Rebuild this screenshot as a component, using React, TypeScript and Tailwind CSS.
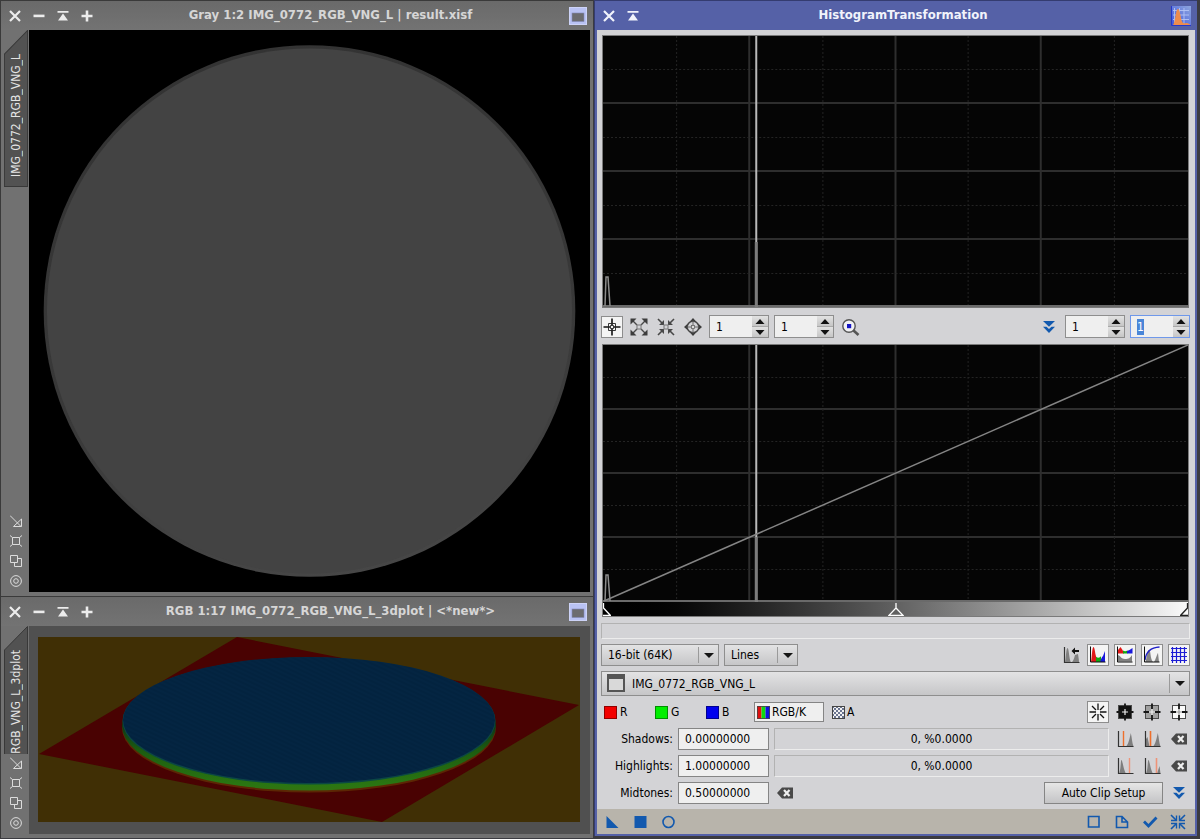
import { useEffect, useRef } from "react";
import type { ReactNode } from "react";

type IconProps = { children: ReactNode; className?: string };

function Icon({ children, className = "" }: IconProps) {
  return (
    <svg viewBox="0 0 22 22" width="22" height="22" fill="none" aria-hidden="true" className={"shrink-0 " + className}>
      {children}
    </svg>
  );
}

/* ---------- window chrome ---------- */

function CloseGlyph() {
  return (
    <svg viewBox="0 0 12 12" width="12" height="12" fill="none" stroke="currentColor" strokeWidth="2.2">
      <path d="M1 1L11 11M11 1L1 11" />
    </svg>
  );
}
function MinusGlyph() {
  return (
    <svg viewBox="0 0 12 12" width="12" height="12" fill="currentColor">
      <rect x="0.5" y="4.6" width="11" height="2.6" />
    </svg>
  );
}
function ShadeGlyph() {
  return (
    <svg viewBox="0 0 12 12" width="12" height="12" fill="currentColor">
      <path d="M.5 1h11v1.8H.5zM6 3.6L11 10.6H1z" />
    </svg>
  );
}
function PlusGlyph() {
  return (
    <svg viewBox="0 0 12 12" width="12" height="12" fill="currentColor">
      <path d="M4.7.5h2.6v4.2h4.2v2.6H7.3v4.2H4.7V7.3H.5V4.7h4.2z" />
    </svg>
  );
}
function WindowGlyph() {
  return (
    <svg viewBox="0 0 18 18" width="18" height="18">
      <rect x=".5" y=".5" width="17" height="17" fill="#b9c2f3" stroke="#cdd3f7" />
      <rect x="3" y="6" width="12" height="8.5" fill="#6c6c70" stroke="#8289b8" strokeWidth=".6" />
    </svg>
  );
}
function HistogramLogo() {
  return (
    <svg viewBox="0 0 20 20" width="20" height="20">
      <defs>
        <linearGradient id="logoBg" x1="0" y1="1" x2="1" y2="0">
          <stop offset="0" stopColor="#3c55e0" />
          <stop offset="1" stopColor="#8fa6dc" />
        </linearGradient>
      </defs>
      <rect width="20" height="20" fill="url(#logoBg)" />
      <path d="M3.500 2v16M8.500 2v16M13 2v16M2 4.500h16M2 9h16M2 13.500h16" stroke="#b4c4f4" strokeWidth=".9" />
      <path d="M2 19C4.500 17 4.500 3 7 3S9.500 15 12 17C14 18 15 15.500 19 18.500V19.500H2z" fill="#ee8c4c" />
      <path d="M.5 0v19.500H20" stroke="#2638c8" fill="none" />
    </svg>
  );
}

const chromeButton = "flex h-[26px] w-6 items-center justify-center pt-1";
const chromeTitle = "flex-1 truncate text-center text-[13px] leading-[27px] font-bold";

function ImageTitleBar({ title }: { title: string }) {
  return (
    <header className="flex h-[29px] items-start bg-gradient-to-b from-[#6a6a6a] to-[#737373] pr-[3px] pl-[2px] text-[#ececec]">
      <button className={chromeButton} aria-label="Close"><CloseGlyph /></button>
      <button className={chromeButton} aria-label="Iconize"><MinusGlyph /></button>
      <button className={chromeButton} aria-label="Shade"><ShadeGlyph /></button>
      <button className={chromeButton} aria-label="Maximize"><PlusGlyph /></button>
      <h2 className={chromeTitle + " pr-1 text-[#d6d6d6]"}>{title}</h2>
      <button className={chromeButton} aria-label="Window menu"><WindowGlyph /></button>
    </header>
  );
}

function SideIcons() {
  return (
    <div className="flex flex-col items-center gap-2 pb-[5px] pl-[2px] text-[#dcdcdc]">
      <button aria-label="Resize" className="block">
        <svg viewBox="0 0 12 12" width="12" height="12" fill="none" stroke="currentColor">
          <path d="M0 .5L11 11.500M11.500 4V11.500H3.500L11.500 4" />
        </svg>
      </button>
      <button aria-label="Fit window" className="block">
        <svg viewBox="0 0 12 12" width="12" height="12" fill="none" stroke="currentColor">
          <path d="M2.500 2.500h7v7h-7zM0 .5l2.500 2M12 .5l-2.500 2M0 11.500l2.500-2M12 11.500l-2.500-2" />
        </svg>
      </button>
      <button aria-label="Duplicate" className="block">
        <svg viewBox="0 0 12 12" width="12" height="12" fill="none" stroke="currentColor">
          <path d="M.5.5h7v7h-7zM7.500 3.500h4v8h-7v-4" />
        </svg>
      </button>
      <button aria-label="Track view" className="block">
        <svg viewBox="0 0 12 12" width="12" height="12" fill="none" stroke="currentColor">
          <circle cx="6" cy="6" r="5.400" />
          <circle cx="6" cy="6" r="2.300" />
        </svg>
      </button>
    </div>
  );
}

function ViewTab({ name, className }: { name: string; className: string }) {
  return (
    <div className={"relative ml-[3px] w-6 overflow-hidden " + className}>
      <svg className="absolute inset-0 h-full w-full" viewBox="0 0 24 156" preserveAspectRatio="xMidYMin slice" aria-hidden="true">
        <path d="M.5 24L23.500 .5V155.500H.5z" fill="#525252" stroke="#383838" />
      </svg>
      <div className="relative flex h-full flex-col items-center pt-6">
        <span className="shrink-0 rotate-180 text-[12px] leading-6 whitespace-nowrap text-[#e4e4e4] [writing-mode:vertical-rl]">{name}</span>
      </div>
    </div>
  );
}

function ImageWindow({ title, tab, tabClass, children }: { title: string; tab: string; tabClass: string; children: ReactNode }) {
  return (
    <section className="flex flex-col border-t border-l border-[#3a3a3a] bg-[#717171]">
      <ImageTitleBar title={title} />
      <div className="flex pr-[3px] pb-1">
        <div className="flex w-7 shrink-0 flex-col justify-between">
          <ViewTab name={tab} className={tabClass} />
          <SideIcons />
        </div>
        <div className="min-w-0 flex-1">{children}</div>
      </div>
    </section>
  );
}

function DiscImage() {
  return (
    <svg viewBox="0 0 562 563" className="block h-auto w-full bg-black" role="img" aria-label="Grayscale disc">
      <defs>
        <linearGradient id="rim" x1="0.4" y1="0" x2="0.6" y2="1">
          <stop offset="0" stopColor="#333333" />
          <stop offset="0.6" stopColor="#393939" />
          <stop offset="1" stopColor="#474747" />
        </linearGradient>
      </defs>
      <circle cx="281" cy="281.500" r="266.300" fill="url(#rim)" />
      <circle cx="281" cy="281.500" r="263" fill="#434343" />
    </svg>
  );
}

function PlotImage() {
  return (
    <div className="bg-[#505050] pt-[11px] pr-[10px] pb-3 pl-[9px]">
      <svg viewBox="0 0 542 185" className="block h-auto w-full bg-[#402f05]" role="img" aria-label="3D surface plot">
        <defs>
          <linearGradient id="wall" gradientUnits="userSpaceOnUse" x1="0" y1="85" x2="0" y2="155">
            <stop offset="0" stopColor="#0f3216" />
            <stop offset="0.4" stopColor="#1c5c10" />
            <stop offset="0.9" stopColor="#2a7612" />
            <stop offset="1" stopColor="#357010" />
          </linearGradient>
          <pattern id="weave" width="4" height="4" patternUnits="userSpaceOnUse" patternTransform="rotate(25)">
            <rect width="4" height="4" fill="#03233f" />
            <path d="M0 1h4" stroke="#042745" strokeWidth="1" />
          </pattern>
        </defs>
        <path d="M199 0L541 68L344 185L1 117z" fill="#490202" />
        <ellipse cx="271" cy="91" rx="187" ry="64.500" fill="#5c2604" />
        <ellipse cx="271" cy="89" rx="187" ry="64.500" fill="url(#wall)" />
        <ellipse cx="271" cy="84" rx="186.500" ry="63.500" fill="#0b4744" />
        <ellipse cx="271" cy="83" rx="186" ry="63" fill="url(#weave)" />
      </svg>
    </div>
  );
}

/* ---------- histogram plots ---------- */

function Plot({ height, className, children }: { height: number; className: string; children?: ReactNode }) {
  const eighths = [1, 2, 3, 4, 5, 6, 7];
  return (
    <svg viewBox={`0 0 584 ${height}`} preserveAspectRatio="none" className={"block w-full bg-[#050505] " + className} role="img" aria-label="Histogram">
      {eighths.map((i) => {
        const dotted = i % 2 === 1;
        const common = { stroke: dotted ? "#242424" : "#2e2e2e", strokeWidth: dotted ? 1 : 2, strokeDasharray: dotted ? "2 2" : undefined };
        const x = Math.round((583 * i) / 8);
        const y = Math.floor((height * i) / 8);
        const shift = dotted ? 0.5 : 0;
        return (
          <g key={i}>
            <path d={`M${x + shift} 0V${height}`} {...common} />
            <path d={`M0 ${y + shift}H584`} {...common} />
          </g>
        );
      })}
      {children}
    </svg>
  );
}

function Peaks({ height, small }: { height: number; small: number }) {
  return (
    <g fill="none">
      <path d={`M0 ${height - 1}H584`} stroke="#6a6a6a" strokeWidth="2" />
      <path d={`M2 ${height - 1}L3 ${height - small}H5L7 ${height - 1}`} stroke="#8c8c8c" strokeWidth="1.500" />
      <path d={`M153 0V${height}`} stroke="#bababa" strokeWidth="2" />
      <path d={`M153 ${height - 65}V${height}`} stroke="#7c7c7c" strokeWidth="3" />
    </g>
  );
}

/* ---------- controls ---------- */

const pressed = "flex h-[22px] w-[22px] items-center justify-center border border-[#8d8d8d] bg-[#f4f4f4]";
const flat = "flex h-[22px] w-[22px] items-center justify-center";

function IconButton({ label, on = false, children }: { label: string; on?: boolean; children: ReactNode }) {
  return (
    <button aria-label={label} aria-pressed={on} className={"shrink-0 " + (on ? pressed : flat)}>
      <Icon>{children}</Icon>
    </button>
  );
}

function Spin({ label, active = false }: { label: string; active?: boolean }) {
  const ref = useRef<HTMLInputElement>(null);
  useEffect(() => {
    if (active) ref.current?.select();
  }, [active]);
  const arrow = "flex flex-1 items-center justify-center bg-gradient-to-b from-[#e2e2e2] to-[#c6c6c6]";
  return (
    <div className={"flex h-[23px] w-[60px] border " + (active ? "border-[#6f98ea] ring-1 ring-[#9db8ee] ring-inset" : "border-[#8e8e8e]")}>
      <input
        ref={ref}
        aria-label={label}
        defaultValue="1"
        className="w-0 min-w-0 flex-1 bg-[#efefef] pl-[6px] text-[12px] leading-4 caret-transparent outline-none selection:bg-[#4a86d8] selection:text-white"
      />
      <div className="flex w-4 flex-col gap-px bg-[#a8a8a8]">
        <button aria-label={label + " up"} className={arrow}>
          <svg viewBox="0 0 10 5" width="10" height="5"><path d="M5 0L9.500 5H.5z" fill="#111" /></svg>
        </button>
        <button aria-label={label + " down"} className={arrow}>
          <svg viewBox="0 0 10 5" width="10" height="5"><path d="M5 5L9.500 0H.5z" fill="#111" /></svg>
        </button>
      </div>
    </div>
  );
}

function Combo({ label, value, className, selectClass }: { label: string; value: string; className: string; selectClass: string }) {
  return (
    <div className={"relative flex border border-[#8e8e8e] bg-gradient-to-b from-[#e3e3e4] to-[#c6c6c8] " + className}>
      <select aria-label={label} className={"w-full appearance-none bg-transparent text-[12px] outline-none " + selectClass}>
        <option>{value}</option>
      </select>
      <span className="pointer-events-none absolute inset-y-[2px] right-0 flex w-5 items-center justify-center border-l border-[#9a9a9a]">
        <svg viewBox="0 0 10 5" width="10" height="5"><path d="M0 0H10L5 5z" fill="#151515" /></svg>
      </span>
    </div>
  );
}

function DoubleDown() {
  return <path d="M5 5h12l-6 5.800zM5 10.800h3.500L11 13l2.500-2.200H17L11 17z" fill="#1259ae" />;
}

function ClearShape() {
  return (
    <>
      <path d="M3 11L8 5.500H19V16.500H8z" fill="#494949" />
      <path d="M10 8l5.500 6M15.500 8l-5.500 6" stroke="#ededed" strokeWidth="2.200" />
    </>
  );
}

function Axes() {
  return <path d="M4.500 3V18.500H19.500" stroke="#333" strokeWidth="1.200" />;
}

function RefCross({ fill, ink, burst }: { fill: string; ink: string; burst?: boolean }) {
  if (burst) {
    return <path d="M11 2.500V9M11 13V19.500M2.500 11H9M13 11H19.500M5 5L9 9M13 13L17 17M17 5L13 9M9 13L5 17" stroke="#111" strokeWidth="1.300" />;
  }
  return (
    <>
      <rect x="4.500" y="4.500" width="13" height="13" fill={fill} stroke="#4a4a4a" />
      <path d="M11 2.500V8M11 14V19.500M2.500 11H8M14 11H19.500" stroke="#161616" strokeWidth="1.800" />
      <path d="M11 8v6M8 11h6" stroke={ink} strokeWidth="1.200" />
    </>
  );
}

function ClipRow({ id, label, value, high = false }: { id: string; label: string; value: string; high?: boolean }) {
  const line = high ? "M15.500 3V18" : "M9.500 3V18";
  const lineColor = high ? "#ee9378" : "#ee6f2c";
  return (
    <div className="flex h-[22px] items-center gap-[5px]">
      <label htmlFor={id} className="w-[72px] text-right">{label}</label>
      <ValueInput id={id} value={value} />
      <output htmlFor={id} className="flex h-[22px] flex-1 items-center justify-center border border-t-[#b2b2b2] border-r-[#ececec] border-b-[#ececec] border-l-[#b2b2b2]">
        0, %0.0000
      </output>
      <IconButton label={label + " auto clip"}>
        <path d={high ? "M5 18.500C7 15 6.500 5 7.500 5S9.500 15 12 18.500z" : "M12 18.500C14.500 16 15.500 11 16.800 5C18 10 18 15 19.500 18.500z"} fill="#7e7e7e" />
        <path d={line} stroke={lineColor} strokeWidth="1.400" />
        <Axes />
      </IconButton>
      <IconButton label={label + " auto clip both"}>
        <path
          d={high ? "M5 18.500C7 15 6.500 5 7.500 5S9.500 15 12 18.500zM16 18.500L18.500 11L19.500 18.500z" : "M5 18.500V11L6.500 9L8.500 18.500zM12 18.500C14.500 16 15.500 11 16.800 5C18 10 18 15 19.500 18.500z"}
          fill="#7e7e7e"
        />
        <path d={line} stroke={lineColor} strokeWidth="1.600" />
        <Axes />
      </IconButton>
      <IconButton label={"Reset " + label}><ClearShape /></IconButton>
    </div>
  );
}

function ValueInput({ id, value }: { id: string; value: string }) {
  return (
    <input id={id} defaultValue={value} className="h-[22px] w-[91px] border border-[#858585] bg-[#efefef] pl-[6px] text-[12px] outline-none" />
  );
}

function Channel({ swatch, label }: { swatch: string; label: string }) {
  return (
    <button className="flex h-5 w-[51px] items-center gap-[3px] pl-[3px]">
      <span className={"h-[13px] w-[13px] border border-black/40 " + swatch} />
      {label}
    </button>
  );
}

function HistogramWindow() {
  return (
    <section className="flex flex-col border-t border-l border-[#343c70] bg-[#5561a7] pb-[2px]">
      <header className="flex h-[29px] items-start pr-1 pl-[2px] text-[#f1f3fb]">
        <button className={chromeButton} aria-label="Close"><CloseGlyph /></button>
        <button className={chromeButton} aria-label="Shade"><ShadeGlyph /></button>
        <h2 className={chromeTitle + " pr-2"}>HistogramTransformation</h2>
        <button className={chromeButton} aria-label="Process icon"><HistogramLogo /></button>
      </header>

      <div className="mx-[2px] flex flex-col bg-[#d3d3d6] text-[12px] text-black">
        <div className="flex flex-col pt-[5px] pr-[5px] pl-1">
          <div className="mx-px border border-[#7a7a7a]">
            <Plot height={271} className="h-[271px]">
              <Peaks height={271} small={30} />
            </Plot>
          </div>

          <div className="mt-[7px] mb-[6px] flex items-center gap-[5px]">
            <IconButton label="Readout mode" on>
              <path d="M11 2.500V9M11 13V19.500M2.500 11H9M13 11H19.500" stroke="#111" strokeWidth="1.600" />
              <path d="M7.500 7.500h7v7h-7zM9.500 9.500h3v3h-3z" stroke="#222" strokeWidth=".9" />
            </IconButton>
            <IconButton label="Zoom in">
              <path d="M5 5L9 9M17 5L13 9M5 17L9 13M17 17L13 13" stroke="#484848" strokeWidth="1.400" />
              <path d="M2.500 2.500h6L2.500 8.500zM19.500 2.500v6L13.500 2.500zM2.500 19.500v-6L8.500 19.500zM19.500 19.500h-6L19.500 13.500z" fill="#3c3c3c" />
              <rect x="9" y="9" width="4" height="4" stroke="#777" />
            </IconButton>
            <IconButton label="Zoom out">
              <path d="M3 3L7 7M19 3L15 7M3 19L7 15M19 19L15 15" stroke="#484848" strokeWidth="1.600" />
              <path d="M9 4v5H4zM13 4v5H18zM9 18v-5H4zM13 18v-5H18z" fill="#484848" />
              <rect x="9" y="9" width="4" height="4" stroke="#777" />
            </IconButton>
            <IconButton label="Pan">
              <path d="M11 2L15.500 7H6.500zM11 20L15.500 15H6.500zM2 11L7 6.500V15.500zM20 11L15 6.500V15.500z" fill="#3c3c3c" />
              <circle cx="11" cy="11" r="5.800" fill="#d3d3d6" stroke="#444" strokeWidth="1.400" />
              <path d="M11 5v12M5 11h12" stroke="#666" />
              <rect x="9.500" y="9.500" width="3" height="3" fill="#ddd" stroke="#666" strokeWidth=".8" />
            </IconButton>
            <Spin label="Horizontal zoom" />
            <Spin label="Vertical zoom" />
            <IconButton label="Zoom 1:1">
              <path d="M14.500 14.500L19.500 19" stroke="#555" strokeWidth="2.600" />
              <circle cx="10" cy="10" r="6.200" fill="#f1f1f4" stroke="#555" strokeWidth="1.400" />
              <rect x="8" y="8" width="4.200" height="4.200" fill="#1515c4" />
            </IconButton>
            <div className="flex-1" />
            <IconButton label="More"><DoubleDown /></IconButton>
            <Spin label="Input horizontal zoom" />
            <Spin label="Input vertical zoom" active />
          </div>

          <div className="mx-px border border-[#7a7a7a]">
            <Plot height={257} className="h-[257px]">
              <Peaks height={257} small={27} />
              <path d="M1 256L584 0" stroke="#858585" strokeWidth="1.500" fill="none" />
            </Plot>
            <div className="flex h-[14px] items-end justify-between bg-gradient-to-r from-black to-[#fafafa]">
              <svg viewBox="0 0 8 13" width="8" height="13" fill="none"><path d="M.5 0V5L7.500 12.500H0" stroke="#fff" strokeWidth="1.300" /></svg>
              <svg viewBox="0 0 16 13" width="16" height="13" fill="none"><path d="M8 0V5L1 12.300H15L8 5" stroke="#fff" strokeWidth="1.300" /></svg>
              <svg viewBox="0 0 8 13" width="8" height="13" fill="none"><path d="M7.500 0V5L.5 12.500H8" stroke="#222" strokeWidth="1.300" /></svg>
            </div>
          </div>

          <div className="mt-[6px] h-4 border border-t-[#b2b2b2] border-r-[#ececec] border-b-[#ececec] border-l-[#b2b2b2]" />

          <div className="mt-[5px] flex items-center gap-[5px]">
            <Combo label="Resolution" value="16-bit (64K)" className="h-[22px] w-[118px]" selectClass="pl-[6px]" />
            <Combo label="Graph style" value="Lines" className="h-[22px] w-[74px]" selectClass="pl-[6px]" />
            <div className="flex-1" />
            <IconButton label="Reject saturated">
              <path d="M5 18.500C6 15 6 4 7.500 4S9 15 11 18.500zM11 18.500C13 18 14 15 15 11L18 10C18.500 14 19 15 19 18.500z" fill="#808080" />
              <path d="M11.500 7L15 3.500V6H19V8H15V10.500z" fill="#111" />
              <Axes />
            </IconButton>
            <IconButton label="Show raw RGB" on>
              <path d="M4 18C5 13 5 3 6.500 3S8 12 10 14V18z" fill="#e01818" />
              <path d="M9 18V13C11 14 13 14 14 12V18z" fill="#12a812" />
              <path d="M13 18C14.500 14 15 13 16 12L18 7V18z" fill="#1818dc" />
              <path d="M3.500 2.500V18H18.500" stroke="#111" />
            </IconButton>
            <IconButton label="Show unmodified" on>
              <path d="M4 9.500V6L6.500 3L8.500 6L10 9.500z" fill="#e01818" />
              <path d="M9 9.500V6.500Q11 8 13.500 6.500V9.500z" fill="#12a812" />
              <path d="M13 9.500V7L15.500 6L18.500 4V9.500z" fill="#1818dc" />
              <path d="M4 17.500V11C7 12 7 15 11 15S16 14 18 11V17.500z" fill="#808080" />
              <path d="M3.500 2.500V18H18.500" stroke="#111" />
            </IconButton>
            <IconButton label="Show curve" on>
              <path d="M4 18C6 16 6 6 8 6S9 15 12 18zM13 18C15 15 16 10 17 9L18 18z" fill="#858585" />
              <path d="M4 16C5 7 10 3.500 18.500 3" stroke="#2020c8" strokeWidth="1.300" />
              <path d="M3.500 2.500V18H18.500" stroke="#111" />
            </IconButton>
            <IconButton label="Show grid" on>
              <path d="M4.500 3V19M8.500 3V19M12.500 3V19M16.500 3V19M3 4.500H19M3 8.500H19M3 12.500H19M3 16.500H19" stroke="#1c1cd4" strokeWidth="1.200" />
            </IconButton>
          </div>

          <div className="relative mt-[5px]">
            <Combo label="View" value="IMG_0772_RGB_VNG_L" className="h-[25px]" selectClass="pl-[30px]" />
            <svg viewBox="0 0 18 18" width="18" height="18" className="pointer-events-none absolute top-[3px] left-[6px]" aria-hidden="true">
              <rect x="1" y="1" width="16" height="16" fill="#d9d9d9" stroke="#555" strokeWidth="2" />
              <rect x="0" y="0" width="18" height="5" fill="#555" />
            </svg>
          </div>

          <div className="mt-[5px] flex items-center">
            <Channel swatch="bg-[#f20000]" label="R" />
            <Channel swatch="bg-[#00ee00]" label="G" />
            <Channel swatch="bg-[#0000ee]" label="B" />
            <button aria-pressed="true" className="flex h-5 w-[70px] items-center gap-[2px] border border-[#858585] bg-[#efefef] pl-[2px]">
              <svg viewBox="0 0 13 13" width="13" height="13" aria-hidden="true">
                <path d="M0 0h4.500v13H0z" fill="#e01010" />
                <path d="M4.500 0h4v13h-4z" fill="#10d810" />
                <path d="M8.500 0H13v13H8.500z" fill="#1010e0" />
                <path d="M.5.5h12v12H.5z" fill="none" stroke="#444" strokeWidth=".8" />
              </svg>
              RGB/K
            </button>
            <button className="flex h-5 w-12 items-center gap-[2px] pl-2">
              <svg viewBox="0 0 13 13" width="13" height="13" aria-hidden="true">
                <defs>
                  <pattern id="check" width="4" height="4" patternUnits="userSpaceOnUse">
                    <rect width="4" height="4" fill="#f2f2f2" />
                    <path d="M0 0h2v2H0zM2 2h2v2H2z" fill="#6a7490" />
                  </pattern>
                </defs>
                <rect x=".5" y=".5" width="12" height="12" fill="url(#check)" stroke="#444" />
              </svg>
              A
            </button>
            <div className="flex-1" />
            <div className="flex gap-[5px]">
              <IconButton label="No readout" on><RefCross fill="none" ink="#111" burst /></IconButton>
              <IconButton label="Black point"><RefCross fill="#111" ink="#eee" /></IconButton>
              <IconButton label="Gray point"><RefCross fill="#a0a0a0" ink="#eee" /></IconButton>
              <IconButton label="White point"><RefCross fill="#fafafa" ink="#999" /></IconButton>
            </div>
          </div>

          <div className="mt-[5px] mb-[5px] flex flex-col gap-[5px]">
            <ClipRow id="shadows" label="Shadows:" value="0.00000000" />
            <ClipRow id="highlights" label="Highlights:" value="1.00000000" high />
            <div className="flex h-[22px] items-center gap-[5px]">
              <label htmlFor="midtones" className="w-[72px] text-right">Midtones:</label>
              <ValueInput id="midtones" value="0.50000000" />
              <IconButton label="Reset midtones"><ClearShape /></IconButton>
              <div className="flex-1" />
              <button className="h-[22px] w-[119px] border border-[#858585] bg-gradient-to-b from-[#e6e6e6] to-[#c4c4c6]">Auto Clip Setup</button>
              <IconButton label="Expand"><DoubleDown /></IconButton>
            </div>
          </div>
        </div>

        <footer className="flex h-[25px] items-center gap-[6px] bg-[#b8b4ab] pr-[6px] pl-1">
          <IconButton label="New instance"><path d="M5.500 5L17.500 17H5.500z" fill="#1259ae" /></IconButton>
          <IconButton label="Apply"><path d="M5.500 5h12v12H5.500z" fill="#1259ae" /></IconButton>
          <IconButton label="Apply global"><circle cx="11.500" cy="11" r="5.500" stroke="#1259ae" strokeWidth="1.600" /></IconButton>
          <div className="flex-1" />
          <IconButton label="Real-time preview"><path d="M5.500 5.500h10.500v10.500H5.500z" stroke="#1259ae" strokeWidth="1.600" /></IconButton>
          <IconButton label="Browse documentation">
            <path d="M5.500 5.500H11L16.500 11V16.500H5.500zM11 5.500V11H16.500" stroke="#1259ae" strokeWidth="1.600" />
          </IconButton>
          <IconButton label="Check"><path d="M5 10.500L9.500 15L17.500 6.500" stroke="#1259ae" strokeWidth="2.800" /></IconButton>
          <IconButton label="Reset">
            <path d="M4 4L9 9M18 4L13 9M4 18L9 13M18 18L13 13" stroke="#1259ae" strokeWidth="1.600" />
            <path d="M9.500 4.500V9.500H4M12.500 4.500V9.500H18M9.500 17.500V12.500H4M12.500 17.500V12.500H18" stroke="#1259ae" strokeWidth="1.400" />
          </IconButton>
        </footer>
      </div>
    </section>
  );
}

export default function App() {
  return (
    <main className="grid min-h-screen grid-cols-[594fr_603fr] items-start bg-[#3b3b40] pr-[3px] font-['DejaVu_Sans_Condensed','DejaVu_Sans',sans-serif]">
      <div className="flex flex-col pr-px">
        <ImageWindow title="Gray 1:2 IMG_0772_RGB_VNG_L | result.xisf" tab="IMG_0772_RGB_VNG_L" tabClass="h-[157px]">
          <DiscImage />
        </ImageWindow>
        <ImageWindow title="RGB 1:17 IMG_0772_RGB_VNG_L_3dplot | <*new*>" tab="RGB_VNG_L_3dplot" tabClass="h-[128px]">
          <PlotImage />
        </ImageWindow>
      </div>
      <HistogramWindow />
    </main>
  );
}
